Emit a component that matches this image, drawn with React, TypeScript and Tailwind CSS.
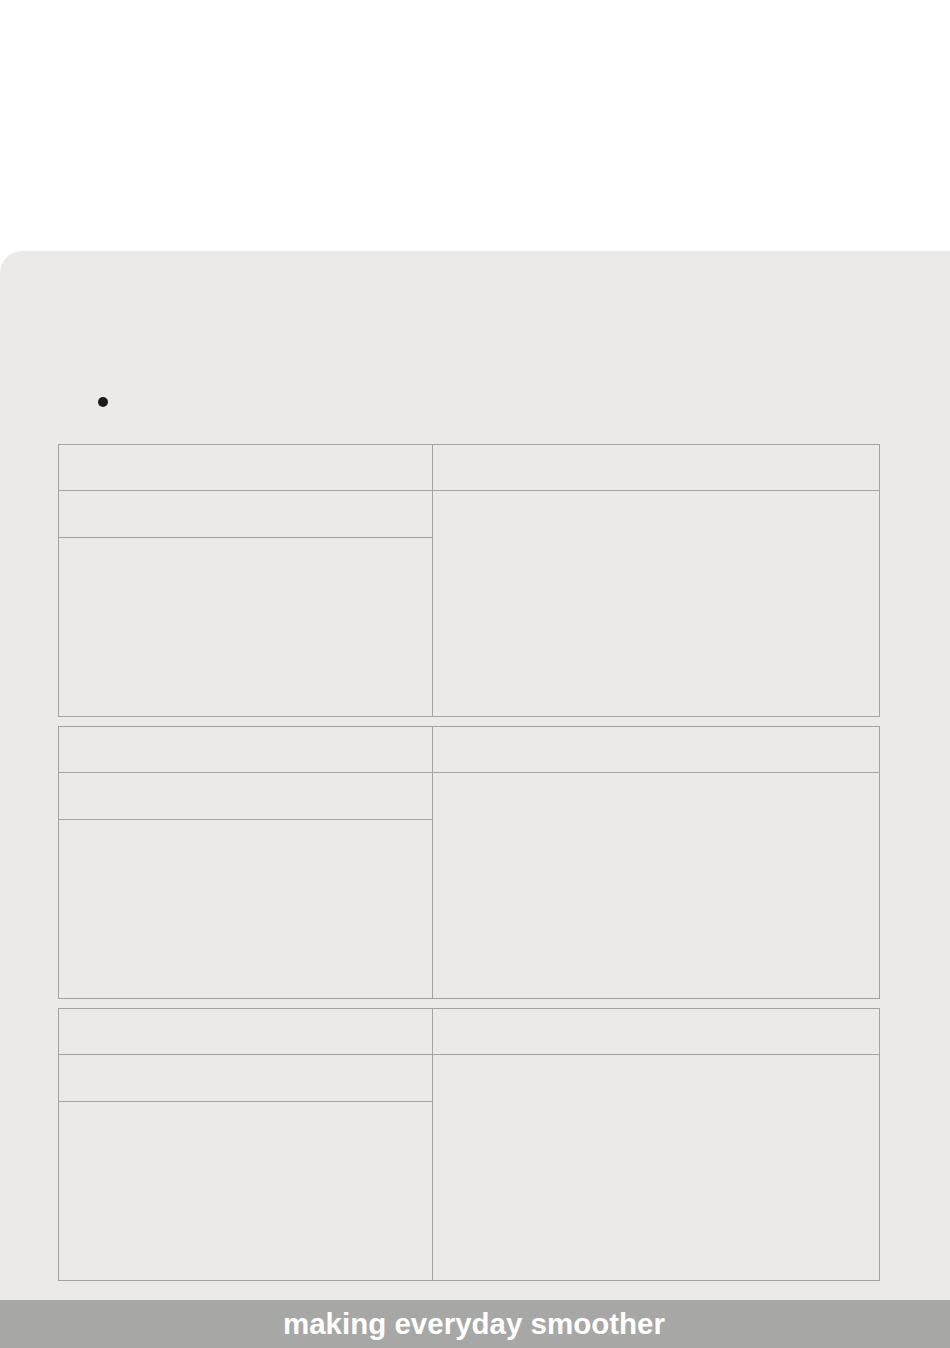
import React from 'react';

const SpecTable = () => (
  <table className="w-[822px] border-collapse table-fixed">
    <colgroup>
      <col className="w-[374px]" />
      <col />
    </colgroup>
    <tbody>
      <tr className="h-[46px]">
        <td className="border border-[#a2a2a0]" />
        <td className="border border-[#a2a2a0]" />
      </tr>
      <tr className="h-[47px]">
        <td className="border border-[#a2a2a0]" />
        <td rowSpan={2} className="border border-[#a2a2a0]" />
      </tr>
      <tr className="h-[179px]">
        <td className="border border-[#a2a2a0]" />
      </tr>
    </tbody>
  </table>
);

const App = () => {
  return (
    <div className="w-[950px] h-[1348px] bg-white flex flex-col overflow-hidden">
      <div className="h-[251px] shrink-0" />
      <div className="flex-1 bg-[#ebeae8] rounded-tl-[22px] flex flex-col pl-[58px]">
        <div className="pt-[146px] pb-[37px] pl-[40px]">
          <span className="w-[10px] h-[10px] rounded-full bg-[#1c1c1c] block" />
        </div>
        <div className="flex flex-col gap-[9px]">
          <SpecTable />
          <SpecTable />
          <SpecTable />
        </div>
      </div>
      <div className="h-[48px] shrink-0 bg-[#a7a7a5] flex items-center justify-center">
        <span className="text-white font-bold text-[29.5px] font-['Liberation_Sans',Arial,sans-serif] leading-none -translate-x-[1px]">
          making everyday smoother
        </span>
      </div>
    </div>
  );
};

export default App;
